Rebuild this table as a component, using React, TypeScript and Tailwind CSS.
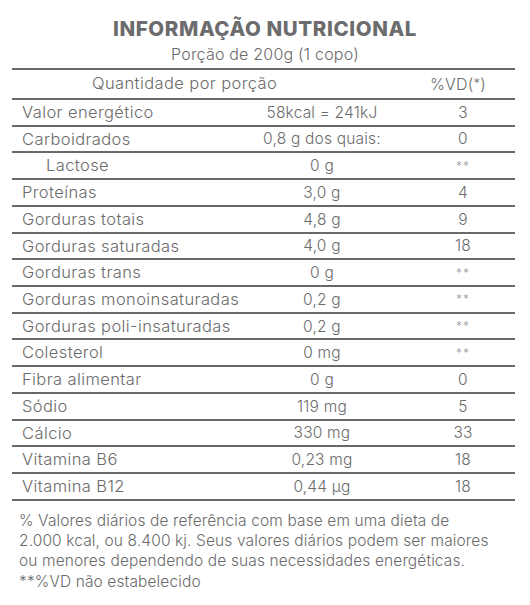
import React from "react";

type Row = { name: string; value: string; vd: string; indent?: boolean };

const rows: Row[] = [
  { name: "Valor energético", value: "58kcal = 241kJ", vd: "3" },
  { name: "Carboidrados", value: "0,8 g dos quais:", vd: "0" },
  { name: "Lactose", value: "0 g", vd: "**", indent: true },
  { name: "Proteínas", value: "3,0 g", vd: "4" },
  { name: "Gorduras totais", value: "4,8 g", vd: "9" },
  { name: "Gorduras saturadas", value: "4,0 g", vd: "18" },
  { name: "Gorduras trans", value: "0 g", vd: "**" },
  { name: "Gorduras monoinsaturadas", value: "0,2 g", vd: "**" },
  { name: "Gorduras poli-insaturadas", value: "0,2 g", vd: "**" },
  { name: "Colesterol", value: "0 mg", vd: "**" },
  { name: "Fibra alimentar", value: "0 g", vd: "0" },
  { name: "Sódio", value: "119 mg", vd: "5" },
  { name: "Cálcio", value: "330 mg", vd: "33" },
  { name: "Vitamina B6", value: "0,23 mg", vd: "18" },
  { name: "Vitamina B12", value: "0,44 µg", vd: "18" },
];

export default function App() {
  return (
    <div
      className="w-[530px] h-[605px] bg-white text-[#6b6b6b] overflow-hidden"
      style={{ fontFamily: "Inter, 'Noto Sans', sans-serif" }}
    >
      <div className="pt-[17px] flex flex-col items-center">
        <h1 className="text-[20.5px] leading-[24px] font-extrabold tracking-[0.6px] text-[#6c6c6e]">
          INFORMAÇÃO NUTRICIONAL
        </h1>
        <p className="text-[16px] leading-[20px] font-light tracking-[0.2px] mt-[3px]">
          Porção de 200g (1 copo)
        </p>
      </div>
      <div className="ml-[12px] w-[503px] mt-[4px] border-t-2 border-[#696969] font-light text-[16.5px] tracking-[0.4px]">
        <div className="grid grid-cols-[221px_178px_104px] h-[30px] border-b-2 border-[#696969] items-center">
          <div className="col-span-2 pl-[80px] -mt-[1px]">Quantidade por porção</div>
          <div className="text-center pr-[10px] -mt-[1px] text-[16px] tracking-[0.2px]">
            %VD(<span className="text-[13px] align-[2px]">*</span>)
          </div>
        </div>
        {rows.map((r) => (
          <div
            key={r.name}
            className="grid grid-cols-[221px_178px_104px] h-[26.73px] border-b-2 border-[#696969] items-center"
          >
            <div className={`whitespace-nowrap ${r.indent ? "pl-[34px]" : "pl-[10px]"}`}>
              {r.name}
            </div>
            <div className="text-center whitespace-nowrap text-[15.5px] tracking-[0.2px]">
              {r.value}
            </div>
            <div
              className={`text-center ${r.vd === "**" ? "text-[#9a9a9a] text-[12px] tracking-[1px]" : "text-[15.5px] tracking-[0.2px]"}`}
            >
              {r.vd}
            </div>
          </div>
        ))}
      </div>
      <div className="pl-[19px] pr-[5px] pt-[10px] text-[15.5px] leading-[20.3px] font-light tracking-[0.12px]">
        <p>% Valores diários de referência com base em uma dieta de</p>
        <p className="whitespace-nowrap">2.000 kcal, ou 8.400 kj. Seus valores diários podem ser maiores</p>
        <p>ou menores dependendo de suas necessidades energéticas.</p>
        <p>**%VD não estabelecido</p>
      </div>
    </div>
  );
}
